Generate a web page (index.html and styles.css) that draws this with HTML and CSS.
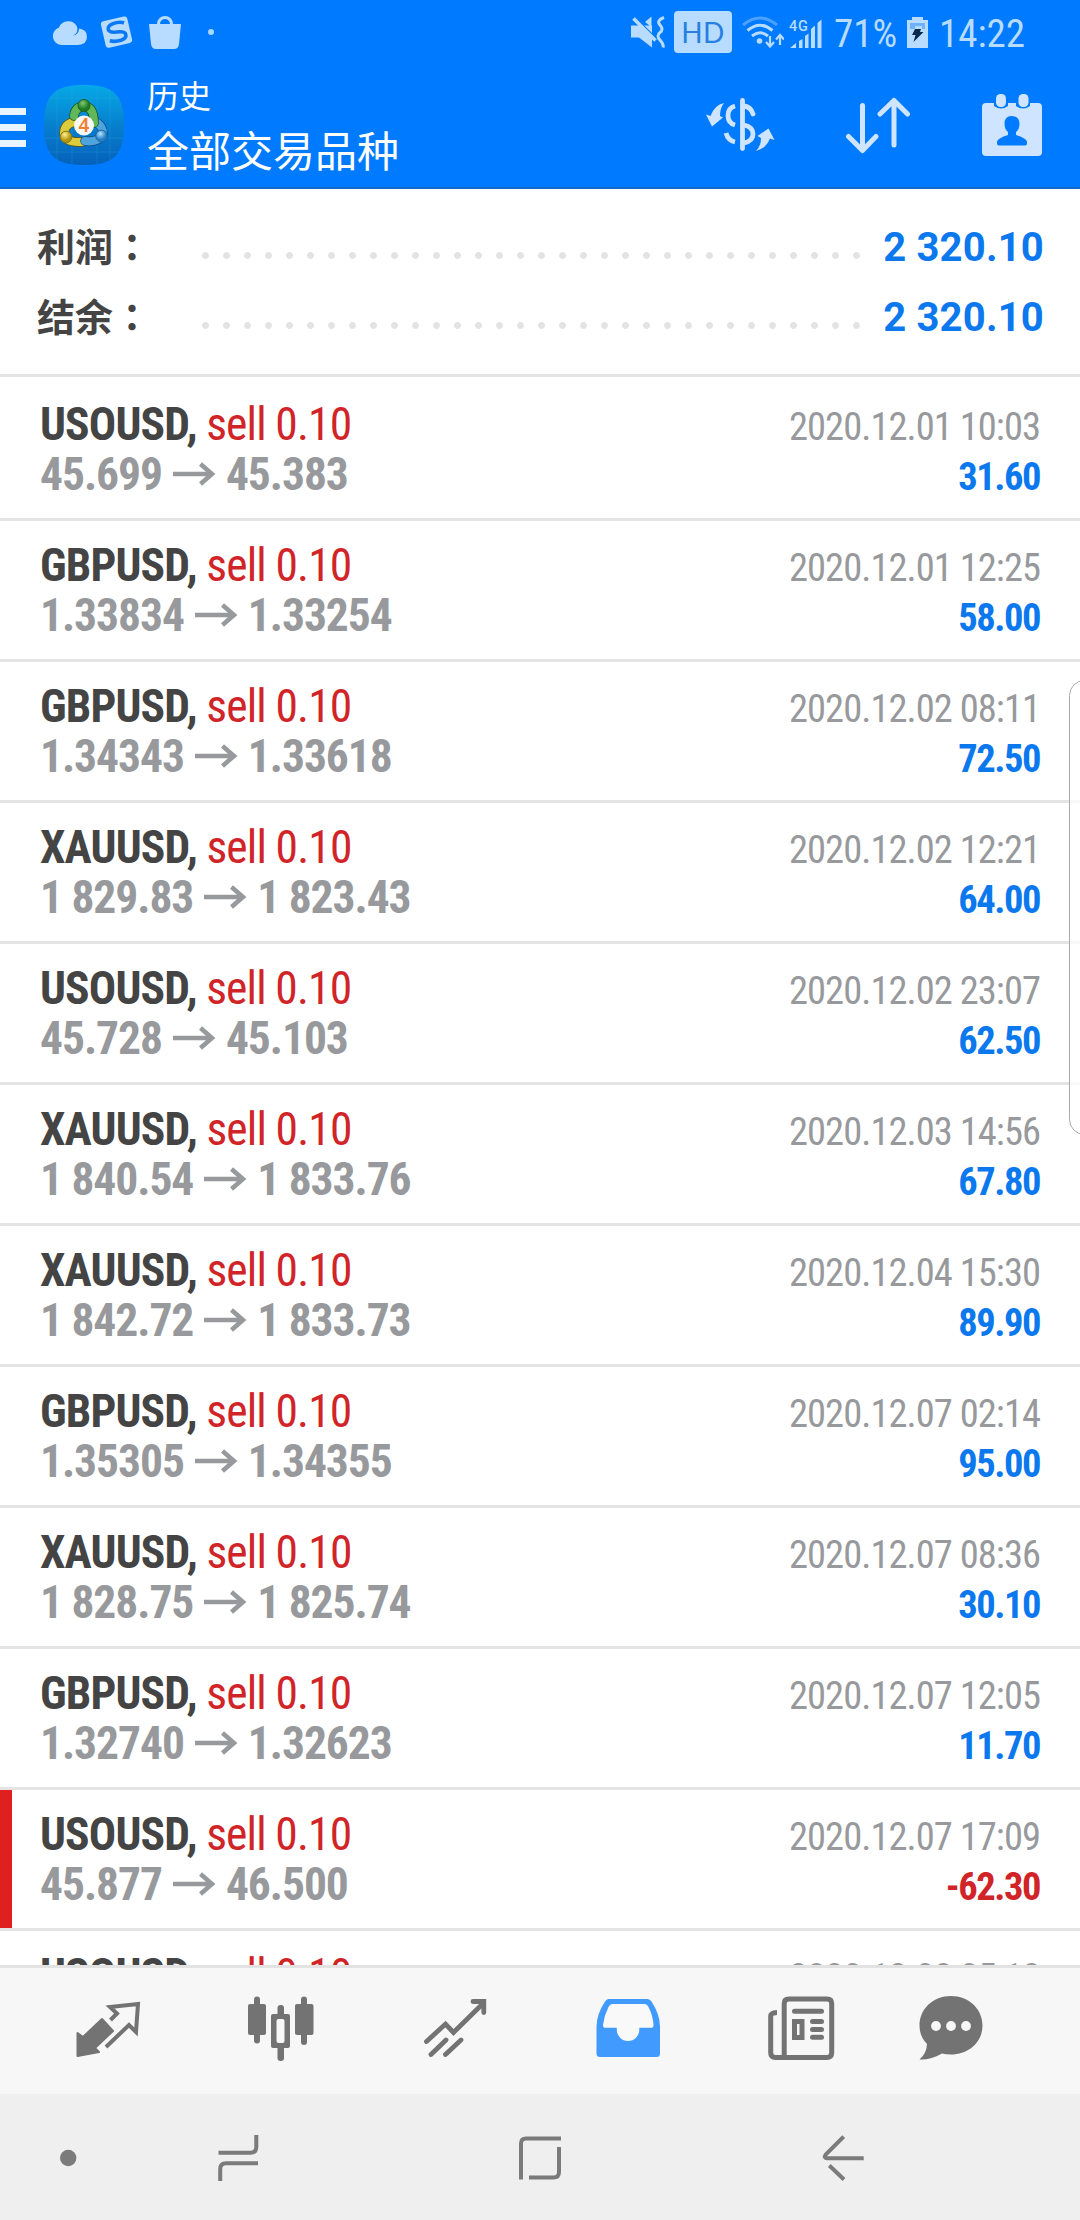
FILE: index.html
```html
<!DOCTYPE html>
<html lang="zh-CN">
<head>
<meta charset="utf-8">
<title>历史</title>
<link rel="stylesheet" href="styles.css">
</head>
<body>
<div class="screen">
  <header class="top">
    <div class="status">
      <div class="status-left">
        <svg width="36" height="36" viewBox="51 14 36 36"><path fill="#b8dcff" d="M61 45a9 9 0 0 1-2-17.500 10 10 0 0 1 18-1q2 6-4 9 6-1 6-7 8 1 8 8 0 8-9 8.500z"/></svg>
        <svg width="36" height="36" viewBox="99 14 36 36"><g transform="rotate(-13 117 32)"><rect x="103" y="18.500" width="27" height="27" rx="3" fill="#b8dcff"/><path d="M126 24.500q-5-2.500-11-1.500-6 1-6 4.500t8 4.500 8 4.500-6 4.500q-6 .5-11-2" fill="none" stroke="#0b78f5" stroke-width="3.600"/></g></svg>
        <svg width="36" height="36" viewBox="146 14 36 36"><path fill="#b8dcff" d="M148 24h32l-2 20q-.5 5-5 5h-18q-4.500 0-5-5z"/><path d="M157.500 26v-2a6.500 6.500 0 0 1 13 0v2" fill="none" stroke="#b8dcff" stroke-width="3"/></svg>
        <span class="more-dot"></span>
      </div>
      <div class="status-right">
        <svg width="34" height="34" viewBox="630 15.500 34 34"><path fill="#b8dcff" d="M630 26h8l13 0 0 22-13-10h-8zM644 22.500l6.500-5.500v10.500z"/><path d="M631 16l24 23.500" stroke="#007aff" stroke-width="3"/><path d="M632.500 19l22 22" stroke="#b8dcff" stroke-width="3.500"/><path d="M663 18q-8 3-4 7.500t0 7.500 0 7.500 3 7.500" fill="none" stroke="#b8dcff" stroke-width="3"/></svg>
        <span class="hd">HD</span>
        <svg width="42" height="36" viewBox="741 14 42 36"><g fill="none" stroke="#b8dcff" stroke-width="3"><path d="M742 25q17-14 34 0" opacity=".4"/><path d="M746.500 30.500q12.500-10.500 25 0M751 36q8-6.500 16 0"/><path stroke-width="2.200" d="M769 36v10M765 42l4 4.500 4-4.500M779 45V35M775 39.500l4-4.500 4 4.500"/></g><circle cx="758.500" cy="41" r="2.800" fill="#b8dcff"/></svg>
        <svg class="signal" width="34" height="36" viewBox="788 14 34 36"><text x="788" y="31" textLength="19">4G</text><path fill="#b8dcff" d="M789 48l6-5v5zM798 41l3.500-2v9H798zM804 36l3.500-2.500V48H804zM810 29l4-3.500V48h-4zM816.500 23l4-3.500V48h-4z"/></svg>
        <span class="pct">71%</span>
        <svg width="22" height="36" viewBox="906 14 22 36"><path fill="#b8dcff" d="M911 17h11v3h5v28h-21V20h5z"/><path fill="#6db2fb" d="M909 23h15v6h-15z"/><path fill="#b8dcff" d="M914 26h7v5h-7z"/><path fill="#0a2a4a" d="M914 29h6l-1 3h3.500L912.500 42l2-7h-3.500z"/></svg>
        <span class="clock">14:22</span>
      </div>
    </div>
    <div class="appbar">
      <div class="burger"><i></i><i></i><i></i></div>
      <svg class="logo" width="80" height="80" viewBox="0 0 80 80">
        <defs>
          <linearGradient id="bg" x2="0" y2="1"><stop offset="0" stop-color="#06a9e6"/><stop offset=".5" stop-color="#0780ce"/><stop offset="1" stop-color="#0561ba"/></linearGradient>
          <radialGradient id="gr" cx=".4" cy=".3"><stop offset="0" stop-color="#7fc870"/><stop offset="1" stop-color="#1f7d24"/></radialGradient>
          <radialGradient id="ye" cx=".4" cy=".3"><stop offset="0" stop-color="#fff08a"/><stop offset="1" stop-color="#b4940f"/></radialGradient>
          <radialGradient id="bl" cx=".4" cy=".3"><stop offset="0" stop-color="#b4e4ff"/><stop offset="1" stop-color="#2380c8"/></radialGradient>
        </defs>
        <path fill="url(#bg)" d="M40 0C70 0 80 10 80 40S70 80 40 80 0 70 0 40 10 0 40 0z"/>
        <path d="M13 5v70M28 1v78M53 1v78M66 5v70M5 13h70M1 53h78M5 67h70" stroke="#39b4ea" stroke-width=".7" opacity=".3"/>
        <g fill="none" stroke-linecap="round">
          <path d="M30 37q-10 2-10 12 2 9 18 8" stroke="#635a12" stroke-width="9.500"/>
          <path d="M30 37q-10 2-10 12 2 9 18 8" stroke="#dccb3a" stroke-width="8"/>
          <path d="M50 36q9 4 9 13-5 9-18 7" stroke="#0d4980" stroke-width="9.500"/>
          <path d="M50 36q9 4 9 13-5 9-18 7" stroke="#4ea4dc" stroke-width="8"/>
          <path d="M30 31q1-9 10-10 10 1 10 17" stroke="#145318" stroke-width="9.500"/>
          <path d="M30 31q1-9 10-10 10 1 10 17" stroke="#62b859" stroke-width="8"/>
        </g>
        <circle cx="40" cy="20.500" r="6" fill="url(#gr)" stroke="#1b6420"/><circle cx="22" cy="52" r="5.800" fill="url(#ye)" stroke="#8a7a18"/><circle cx="57.500" cy="51" r="5.800" fill="url(#bl)" stroke="#1d639f"/>
        <circle cx="40" cy="40.500" r="10" fill="#f7f8f5"/>
        <text x="40" y="47" text-anchor="middle" class="logo-num">4</text>
      </svg>
      <div class="titles"><div class="title">历史</div><div class="subtitle">全部交易品种</div></div>
      <div class="actions">
        <svg width="70" height="64" viewBox="705 93 70 64"><g fill="none" stroke="#cfe5ff" stroke-linecap="round" stroke-width="4.800"><path d="M742.500 100.500V148.500"/><path stroke-linecap="butt" d="M735 106q-7 2-7 9.500t7 9.500M735 142q-7-1.500-9-9"/><path d="M744 106q7 1 9 8M744 125q9 2 9 9t-9 9"/></g><path fill="#cfe5ff" d="M724 103q-4 5-4 13l3 1.500-11 9-6-12 4.500 1.500q4-11 13.500-13zM756 151q5-5 5-13l-3.500-2 11-7.500 6 11.500-4.500-1.500q-4 10-14 12.500z"/></svg>
        <svg width="66" height="64" viewBox="843 93 66 64"><path fill="none" stroke="#cfe5ff" stroke-width="5" stroke-linecap="round" stroke-linejoin="round" d="M860.500 105.500V150M846.500 136.500l14 14 13.500-14M892 145V100.500M878 114l14-13.500 13.500 13.500"/></svg>
        <svg width="62" height="64" viewBox="981 93 62 64"><rect x="982" y="103" width="60" height="53" rx="4" fill="#cfe5ff"/><path fill="#007aff" d="M994 103h14v3q-7 5-14 0zM1016 103h14v3q-7 5-14 0z"/><rect x="996" y="94" width="10" height="13" rx="4.500" fill="#cfe5ff"/><rect x="1018.500" y="94" width="10" height="13" rx="4.500" fill="#cfe5ff"/><path fill="#007aff" d="M1011.500 116q8 0 8 8 0 5-3.500 8v3q10 3 11 6.500v2q0 2-2 2h-26q-2 0-2-2v-2q1-3.500 11-6.500v-3q-3.500-3-3.500-8 0-8 7-8z"/></svg>
      </div>
    </div>
  </header>

  <section class="summary">
    <div class="sum-row"><span class="sum-label">利润<span class="colon" lang="ja">：</span></span><span class="dots"></span><span class="sum-value">2 320.10</span></div>
    <div class="sum-row"><span class="sum-label">结余<span class="colon" lang="ja">：</span></span><span class="dots"></span><span class="sum-value">2 320.10</span></div>
  </section>

  <main class="deals" id="deals"></main>

  <nav class="tabs">
    <svg width="80" height="76" viewBox="68 1990 80 76"><path fill="#737373" stroke="#737373" stroke-width="2" stroke-linejoin="round" d="M77.500 2033l5.500 4 19-18 11 12-18 17 4 4-21.500 4z"/><path fill="none" stroke="#737373" stroke-width="4" d="M110.500 2020l6.500-6.500-7-6.500 28-3-2 28-7-7-23 22"/></svg>
    <svg width="80" height="76" viewBox="241 1990 80 76"><g fill="#737373"><rect x="248" y="2004" width="18" height="31" rx="2"/><rect x="254" y="1996.500" width="6" height="47" rx="3"/><rect x="295" y="2004" width="18.500" height="31" rx="2"/><rect x="301" y="1996.500" width="6" height="48.500" rx="3"/><rect x="277.500" y="2005" width="6.500" height="56" rx="3"/><rect x="271" y="2014" width="19" height="34" rx="2"/></g><rect x="276.500" y="2019" width="8" height="24" rx="2" fill="#f7f7f7"/></svg>
    <svg width="80" height="76" viewBox="413.500 1990 80 76"><path fill="none" stroke="#737373" stroke-width="4.800" stroke-linecap="round" d="M425 2041.500l19-17.500 8 8.500 29.500-29M471.500 2001.500h10.800V2012.500M429.500 2054.500l15-14.500M444 2054.500l15.500-14.500"/></svg>
    <svg width="80" height="76" viewBox="587 1990 80 76"><path fill="#419bff" d="M607.500 1999h39q2.500 0 4 2.500 8.500 13 8.500 25v27q0 3.500-3.500 3.500h-56.500q-3.500 0-3.500-3.500v-27q0-12 8.500-25 1.500-2.500 3.500-2.500z"/><path fill="#f9f9f9" d="M612 2004h31q3 0 4.500 3 4.500 9 5 18 0 2.800-2 2.800H638.300v2a11 11 0 0 1-22.500 0v-2H604q-2.200 0-2-2.800 1-9 5.500-18 1.500-3 4.500-3z"/></svg>
    <svg width="80" height="76" viewBox="761.500 1990 80 76"><g fill="none" stroke="#737373" stroke-width="5" stroke-linecap="round"><path stroke-linecap="butt" d="M777.500 2012.500q-6.300 0-6.300 4v36q0 5 5 5h51q5 0 5-5v-49q0-4.500-4.500-4.500h-38.500q-4.500 0-4.500 4.500v53"/><path d="M795 2011.300h27M813 2021.500h9M813 2029.500h9M813 2037.300h9"/><rect x="795" y="2021.500" width="7.500" height="16"/></g></svg>
    <svg width="80" height="76" viewBox="911 1990 80 76"><path fill="#737373" d="M951 1996c18 0 31.500 13 31.500 29.500S969 2054.500 951 2054.500q-5 0-9-1-11 6.500-22.500 6 7-6 7.500-15.500-7.500-7.500-7.500-18.500C919.500 2009 933 1996 951 1996z"/><g fill="#f7f7f7"><circle cx="936" cy="2026" r="4.900"/><circle cx="951" cy="2026" r="4.900"/><circle cx="966" cy="2026" r="4.900"/></g></svg>
  </nav>

  <footer class="sysnav">
    <svg width="20" height="60" viewBox="58 2128 20 60"><circle cx="68.200" cy="2158" r="8.200" fill="#7b7b7b"/></svg>
    <svg width="44" height="60" viewBox="216 2128 44 60"><path d="M218.500 2152.700h32q5.800 0 5.800-6V2135M258 2163.300h-32q-5.800 0-5.800 6V2181"/></svg>
    <svg width="46" height="60" viewBox="517 2128 46 60"><path d="M521 2179.500v-36q0-5 5-5h35M559 2147v25q0 5.500-5.500 5.500h-24.500"/></svg>
    <svg width="46" height="60" viewBox="820 2128 46 60"><path d="M863.700 2158.200h-37q-3.500-.5-1-3.500l18-18M829.300 2165.500l14.700 14"/></svg>
  </footer>
  <div class="edge"></div>
</div>
<script src="deals.js"></script>
</body>
</html>
```
FILE: deals.js
```js
const deals = [
  ["USOUSD", "45.699", "45.383", "2020.12.01 10:03", "31.60"],
  ["GBPUSD", "1.33834", "1.33254", "2020.12.01 12:25", "58.00"],
  ["GBPUSD", "1.34343", "1.33618", "2020.12.02 08:11", "72.50"],
  ["XAUUSD", "1 829.83", "1 823.43", "2020.12.02 12:21", "64.00"],
  ["USOUSD", "45.728", "45.103", "2020.12.02 23:07", "62.50"],
  ["XAUUSD", "1 840.54", "1 833.76", "2020.12.03 14:56", "67.80"],
  ["XAUUSD", "1 842.72", "1 833.73", "2020.12.04 15:30", "89.90"],
  ["GBPUSD", "1.35305", "1.34355", "2020.12.07 02:14", "95.00"],
  ["XAUUSD", "1 828.75", "1 825.74", "2020.12.07 08:36", "30.10"],
  ["GBPUSD", "1.32740", "1.32623", "2020.12.07 12:05", "11.70"],
  ["USOUSD", "45.877", "46.500", "2020.12.07 17:09", "-62.30"],
  ["USOUSD", "", "", "2020.12.08 05:18", ""]
];
const arrow = '<svg class="arrow" width="43" height="26" viewBox="0 0 43 26"><path d="M0 12h38M27.500 2l11.500 10-11.500 10"/></svg>';
document.getElementById("deals").innerHTML = deals.map(([sym, from, to, date, profit]) => `
  <div class="deal${profit[0] === "-" ? " loss" : ""}">
    <div class="line"><span class="sym">${sym},</span><span class="side">sell 0.10</span><span class="date">${date}</span></div>
    ${from ? `<div class="line"><span class="from">${from}</span>${arrow}<span class="to">${to}</span><span class="profit">${profit}</span></div>` : ""}
  </div>`).join("");
```
FILE: styles.css
```css
* { box-sizing: border-box; }
body { margin: 0; background: #fff; }
svg { display: block; flex: none; }
.screen {
  position: relative;
  display: flex;
  flex-direction: column;
  width: 1080px;
  height: 2220px;
  overflow: hidden;
  font-family: Roboto, "Noto Sans CJK SC", sans-serif;
}

.top { flex: none; height: 189px; background: #007aff; border-bottom: 2px solid #1468c8; }
.status { display: flex; justify-content: space-between; height: 64px; padding: 0 57px 0 51px; color: #b8dcff; }
.status-left, .status-right { display: flex; align-items: center; }
.status-left { gap: 12px; }
.more-dot { width: 6px; height: 6px; margin-left: 13px; border-radius: 50%; background: #a8d6ff; }
.hd {
  width: 58px; height: 42px; margin: 0 10px 0 9px;
  border-radius: 4px; background: #b8dcff; color: #2680e2;
  font: 400 28px/43px Lato, sans-serif; text-align: center; letter-spacing: .5px;
}
.signal { margin: 0 11px 0 5px; }
.signal text { font: 500 14.500px Roboto, sans-serif; fill: #b8dcff; }
.pct, .clock { padding-top: 3px; font: 400 39px/64px "Roboto Condensed", sans-serif; }
.pct { width: 61px; margin-right: 12px; }
.clock { width: 84px; margin-left: 10px; }

.appbar { display: flex; height: 123px; }
.burger { display: flex; flex-direction: column; gap: 9px; width: 26px; margin: 44px 18px 0 0; }
.burger i { height: 7px; background: #e8f5ff; }
.logo { margin-top: 21px; }
.logo-num { font: 600 19px "Noto Sans", sans-serif; fill: #f08034; }
.titles { margin-left: 23px; color: #fff; font-family: "Noto Sans CJK SC", sans-serif; }
.title { margin-top: 10px; font-size: 32px; line-height: 40px; }
.subtitle { margin-top: 8px; font-size: 42px; line-height: 54px; }
.actions { display: flex; gap: 70px; margin: 29px 37px 0 auto; }

.summary { flex: none; height: 188px; padding-top: 22px; border-bottom: 3px solid #e4e4e4; }
.sum-row { display: flex; height: 70px; align-items: center; padding: 0 36px 0 37px; }
.sum-label { width: 158px; padding-bottom: 3px; color: #444; font: 700 38px/67px "Noto Sans CJK SC", sans-serif; }
.colon { font-family: "Noto Sans CJK JP", sans-serif; }
.dots { width: 672px; height: 7px; margin-top: 18px; background: radial-gradient(circle, #e3e3e3 3px, transparent 3.800px) 0 0 / 21px 7px; }
.sum-value { margin-left: auto; padding-top: 3px; color: #0b78ee; font-size: 40px; font-weight: 700; line-height: 67px; letter-spacing: .2px; }

.deals { flex: none; height: 1588px; overflow: hidden; }
.deal { height: 141px; padding: 20px 40px 0 40px; border-top: 3px solid #e4e4e4; font-family: "Roboto Condensed", sans-serif; }
.deal:first-child { border-top-color: transparent; }
.loss { background: linear-gradient(#e02020, #e02020) 0 0 / 12px 100% no-repeat; }
.line { display: flex; align-items: baseline; height: 50px; font-size: 45.500px; line-height: 50px; }
.sym { color: #444; font-weight: 700; letter-spacing: -.85px; }
.side { margin-left: 9.500px; color: #d02428; letter-spacing: -.85px; }
.from, .to { color: #97999c; font-weight: 700; letter-spacing: -1.050px; }
.arrow { align-self: center; margin: 0 10px 0 11px; }
.arrow path { fill: none; stroke: #97999c; stroke-width: 4.500px; }
.date { margin-left: auto; color: #97999c; font-size: 38.500px; letter-spacing: -.95px; }
.profit { margin-left: auto; color: #0b78ee; font-size: 38.500px; font-weight: 700; letter-spacing: -1.450px; }
.loss .profit { color: #d02428; }

.tabs {
  flex: none; display: grid; grid-template-columns: repeat(5, 173.300px) 126px; justify-items: center;
  height: 129px; padding: 22px 0 0 21.500px; border-top: 3px solid #e2e2e2; background: #f7f7f7;
}
.sysnav { flex: none; display: flex; height: 126px; padding: 34px 0 0 58px; background: #efefef; }
.sysnav svg:nth-child(2) { margin-left: 138px; }
.sysnav svg:nth-child(n + 3) { margin-left: 257px; }
.sysnav path { fill: none; stroke: #7b7b7b; stroke-width: 4px; }
.edge {
  position: absolute; top: 680px; right: -20px; width: 31px; height: 455px;
  border: 1.500px solid #aaa; border-radius: 18px; background: rgba(255, 255, 255, .75);
}
```
